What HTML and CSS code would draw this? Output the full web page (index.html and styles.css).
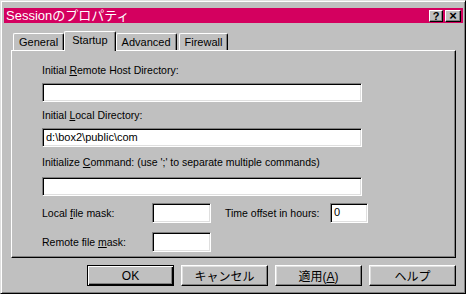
FILE: index.html
```html
<!DOCTYPE html>
<html lang="ja">
<head>
  <meta charset="UTF-8" />
  <title>Sessionのプロパティ</title>
  <link rel="stylesheet" href="styles.css">
</head>
<body>

<div class="window">
  <div class="titlebar">
    <span class="title">Sessionのプロパティ</span>
    <div class="caption">
      <span class="cap-btn">?</span>
      <span class="cap-btn close">×</span>
    </div>
  </div>

  <div class="tabs">
    <div class="tab">General</div>
    <div class="tab active">Startup</div>
    <div class="tab">Advanced</div>
    <div class="tab">Firewall</div>
  </div>

  <div class="panel">
    <div class="lbl first">Initial <u>R</u>emote Host Directory:</div>
    <div class="field wide"></div>

    <div class="lbl">Initial <u>L</u>ocal Directory:</div>
    <div class="field wide">d:\box2\public\com</div>

    <div class="lbl gap">Initialize <u>C</u>ommand: (use ';' to separate multiple commands)</div>
    <div class="field wide cmd"></div>

    <div class="row first-row">
      <span class="lbl-inline">Local <u>f</u>ile mask:</span>
      <div class="field mask"></div>
      <span class="lbl-inline offset">Time offset in hours:</span>
      <div class="field hours">0</div>
    </div>
    <div class="row">
      <span class="lbl-inline">Remote file <u>m</u>ask:</span>
      <div class="field mask"></div>
    </div>
  </div>

  <div class="buttons">
    <div class="btn default"><span>OK</span></div>
    <div class="btn"><span>キャンセル</span></div>
    <div class="btn"><span>適用(<u>A</u>)</span></div>
    <div class="btn"><span>ヘルプ</span></div>
  </div>
</div>

</body>
</html>
```

FILE: styles.css
```css
body {
  margin: 0;
  background: #c0c0c0;
  font-family: "Liberation Sans", "Noto Sans CJK JP", sans-serif;
  color: #000;
  overflow: hidden;
}
.window {
  width: 466px;
  height: 294px;
  box-sizing: border-box;
  border: 1px solid;
  border-color: #dfdfdf #000 #000 #dfdfdf;
  box-shadow: inset 1px 1px #fff, inset -1px -1px #808080;
  padding: 7px 2px 0 3px;
}
.titlebar {
  height: 15px;
  background: #d4005f;
  color: #fff;
  display: flex;
  align-items: center;
  justify-content: space-between;
  padding: 0 2px;
  font-size: 13px;
}
.title {
  line-height: 15px;
}
.caption {
  display: flex;
  gap: 2px;
}
.cap-btn {
  width: 14px;
  height: 12px;
  box-sizing: border-box;
  background: #c0c0c0;
  color: #000;
  border: 1px solid;
  border-color: #fff #000 #000 #fff;
  box-shadow: inset -1px -1px #808080;
  font-size: 11px;
  font-weight: bold;
  line-height: 10px;
  text-align: center;
}
.cap-btn.close {
  width: 16px;
  font-size: 13px;
}

/* tabs */
.tabs {
  display: flex;
  align-items: flex-end;
  gap: 2px;
  height: 19px;
  margin: 8px 0 0 9px;
}
.tab {
  height: 17px;
  box-sizing: border-box;
  padding: 0 5px;
  font-size: 11px;
  line-height: 16px;
  border: 1px solid;
  border-bottom: none;
  border-color: #fff #000 #000 #fff;
  border-radius: 2px 2px 0 0;
  box-shadow: inset -1px 0 #808080;
}
.tab.active {
  height: 20px;
  margin: 0 -2px -1px;
  padding: 0 7px;
  line-height: 16px;
  background: #c0c0c0;
  position: relative;
  z-index: 1;
}

/* panel */
.panel {
  height: 208px;
  box-sizing: border-box;
  margin: 0 7px 0 7px;
  border: 1px solid;
  border-color: #fff #000 #000 #fff;
  box-shadow: inset -1px -1px #808080;
  padding: 12px 0 0 30px;
  font-size: 10.5px;
}
.lbl {
  line-height: 14px;
  margin-top: 6px;
}
.lbl.first {
  margin-top: 0;
}
.lbl.gap {
  margin-top: 8px;
}
.field {
  height: 19px;
  box-sizing: border-box;
  background: #fff;
  border: 1px solid;
  border-color: #808080 #fff #fff #808080;
  box-shadow: inset 1px 1px #000, inset -1px -1px #dfdfdf;
  padding: 0 3px;
  font-size: 11px;
  line-height: 17px;
  margin-top: 6px;
}
.field.wide {
  width: 320px;
}
.field.cmd {
  margin-top: 8px;
}
.row {
  display: flex;
  align-items: center;
  margin-top: 9px;
}
.row.first-row {
  margin-top: 7px;
}
.row .field {
  margin-top: 0;
  height: 20px;
}
.lbl-inline {
  width: 110px;
}
.lbl-inline.offset {
  width: 105px;
  margin-left: 14px;
}
.field.mask {
  width: 59px;
}
.field.hours {
  width: 38px;
}

/* buttons */
.buttons {
  display: flex;
  justify-content: flex-end;
  gap: 7px;
  margin: 7px 7px 0 0;
}
.btn {
  width: 87px;
  height: 21px;
  box-sizing: border-box;
  border: 1px solid;
  border-color: #fff #000 #000 #fff;
  box-shadow: inset -1px -1px #808080, inset 1px 1px #dfdfdf;
  display: flex;
  align-items: center;
  justify-content: center;
  font-size: 12px;
}
.btn.default {
  border: 1px solid #000;
  box-shadow: inset 1px 1px #fff, inset -1px -1px #000, inset -2px -2px #808080;
}
```
